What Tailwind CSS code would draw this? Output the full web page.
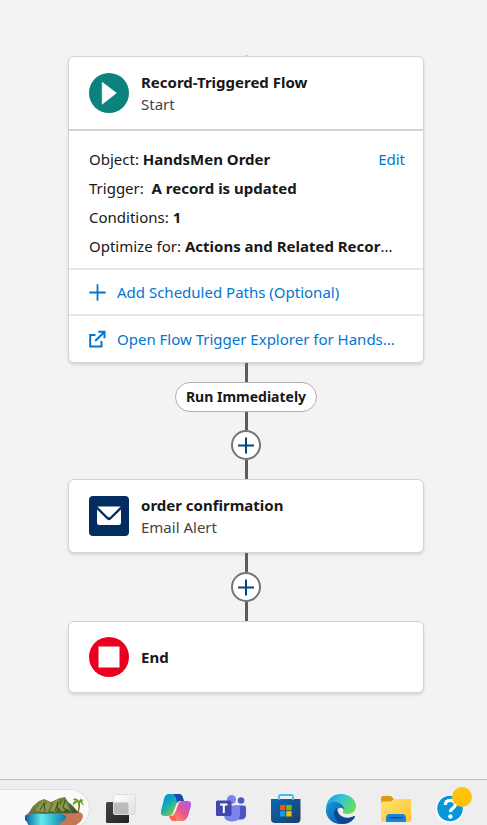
<!DOCTYPE html>
<html lang="en">
<head>
<meta charset="utf-8">
<meta name="viewport" content="width=device-width, initial-scale=1">
<title>Flow Builder</title>
<script src="https://cdn.jsdelivr.net/npm/@tailwindcss/browser@4"></script>
</head>
<body class="flex min-h-screen flex-col bg-[#f3f3f3] font-['Segoe_UI','Noto_Sans',sans-serif] text-[15px] leading-[22px] text-[#181818]">
<main class="flex grow flex-col items-center pt-[55px] pr-[63px] pl-[68px]">
  <div class="h-px w-[3px] bg-[#cfcfcf]"></div>

  <section class="w-full rounded-md border border-[#d4d4d4] bg-white shadow-[0_2px_3px_rgba(0,0,0,0.12)]">
    <header class="flex items-center gap-3 border-b-2 border-[#d4d4d4] px-5 py-3.5">
      <svg class="size-10 shrink-0" viewBox="0 0 40 40" aria-hidden="true"><circle cx="20" cy="20" r="20" fill="#0b827c"/><path d="M13.2 9.2 L27.4 20 L13.2 31.2 Z" fill="#fff" stroke="#fff" stroke-width=".6" stroke-linejoin="round"/></svg>
      <div>
        <h2 class="font-bold">Record-Triggered Flow</h2>
        <p class="text-[#444]">Start</p>
      </div>
    </header>
    <div class="border-b-2 border-[#e5e5e5] px-5 pt-3.5 pb-[7px] leading-[29px]">
      <div class="flex justify-between">
        <p>Object: <strong>HandsMen Order</strong></p>
        <a href="#" class="-mr-0.5 text-[#0176d3]">Edit</a>
      </div>
      <p>Trigger:&nbsp; <strong>A record is updated</strong></p>
      <p>Conditions: <strong>1</strong></p>
      <p class="whitespace-nowrap">Optimize for: <strong>Actions and Related Recor</strong>...</p>
    </div>
    <a href="#" class="flex items-center gap-2.5 border-b-2 border-[#e5e5e5] px-5 py-[11px] text-[#0176d3]">
      <svg class="size-[18px] shrink-0" viewBox="0 0 18 18" aria-hidden="true"><path d="M8.500 2v15M1 9.500h15" stroke="#0176d3" stroke-width="1.8" stroke-linecap="round"/></svg>
      <span class="whitespace-nowrap">Add Scheduled Paths (Optional)</span>
    </a>
    <a href="#" class="flex items-center gap-2.5 px-5 py-3 text-[#0176d3]">
      <svg class="size-[18px] shrink-0" viewBox="0 0 18 18" fill="none" stroke="#0176d3" stroke-width="2" aria-hidden="true"><path d="M6.500 5H1.200v11.400H12.500V11M9.300 1.800H15.500v6.400M15.100 2.200L6.200 11"/></svg>
      <span class="whitespace-nowrap">Open Flow Trigger Explorer for Hands...</span>
    </a>
  </section>

  <div class="h-[19px] w-[3px] bg-[#5c5c5c]"></div>
  <div class="flex h-[30px] items-center rounded-full border border-[#aeaeae] bg-white px-2.5 text-sm font-bold">Run Immediately</div>
  <div class="h-[18px] w-[3px] bg-[#5c5c5c]"></div>
  <button type="button" aria-label="Add element" class="flex size-[30px] items-center justify-center rounded-full border-2 border-[#747474] bg-white">
    <svg class="size-[18px]" viewBox="0 0 18 18" aria-hidden="true"><path d="M9 1.5v16M1 9.5h16" stroke="#014486" stroke-width="2"/></svg>
  </button>
  <div class="h-[19px] w-[3px] bg-[#5c5c5c]"></div>

  <section class="flex w-full items-center gap-3 rounded-md border border-[#d4d4d4] bg-white px-5 py-3.5 shadow-[0_2px_3px_rgba(0,0,0,0.12)]">
    <svg class="size-10 shrink-0" viewBox="0 0 40 40" aria-hidden="true"><rect width="40" height="40" rx="4" fill="#032d60"/><path d="M8.4 10.6h23.2L21.3 20.7q-1.3 1.2-2.6 0Z" fill="#fff"/><path d="M8 13.6l10 9.7q2 1.7 4 0l10-9.7v13.2q0 2.2-2.2 2.2H10.200q-2.200 0-2.200-2.200Z" fill="#fff"/></svg>
    <div>
      <h2 class="font-bold">order confirmation</h2>
      <p class="text-[#444]">Email Alert</p>
    </div>
  </section>

  <div class="h-[19px] w-[3px] bg-[#5c5c5c]"></div>
  <button type="button" aria-label="Add element" class="flex size-[30px] items-center justify-center rounded-full border-2 border-[#747474] bg-white">
    <svg class="size-[18px]" viewBox="0 0 18 18" aria-hidden="true"><path d="M9 1.5v16M1 9.5h16" stroke="#014486" stroke-width="2"/></svg>
  </button>
  <div class="h-[19px] w-[3px] bg-[#5c5c5c]"></div>

  <section class="flex w-full items-center gap-3 rounded-md border border-[#d4d4d4] bg-white px-5 py-[15px] shadow-[0_2px_3px_rgba(0,0,0,0.12)]">
    <svg class="size-10 shrink-0" viewBox="0 0 40 40" aria-hidden="true"><circle cx="20" cy="20" r="20" fill="#ea001e"/><path d="M9.500 9.500h21v21h-21Z" fill="#fff"/></svg>
    <h2 class="font-bold">End</h2>
  </section>
</main>

<footer class="flex h-[46px] items-start gap-4 overflow-hidden border-t border-[#bcbcbc] bg-[#eeeeee]">
  <div class="mt-[9px] flex h-10 w-[90px] shrink-0 justify-end rounded-r-full border border-l-0 border-[#e0e0e0] bg-[#fafafa] pr-1">
    <svg class="mt-1.5 h-[34px] w-[60px]" viewBox="0 0 60 34" aria-hidden="true">
      <defs>
        <linearGradient id="sea" x1="0" x2="1"><stop stop-color="#075f9c"/><stop offset=".4" stop-color="#60ebed"/><stop offset="1" stop-color="#087daf"/></linearGradient>
        <linearGradient id="hill" x2="1" y2="1"><stop stop-color="#8f9a48"/><stop offset=".5" stop-color="#64773a"/><stop offset="1" stop-color="#304a29"/></linearGradient>
      </defs>
      <path d="M0 20q2-4 12-5l38 0q8 1 8 5 0 5-7 9l-6 5H5Z" fill="#c87656"/>
      <path d="M3 18L8 10 14 5 19 3 26 6 35 2 40 1 43 6 47 9 54 17Z" fill="url(#hill)"/>
      <path d="M10 15l6-8 2-3 1 7 4-6 3 3-3 8M25 15l4-9 4-3 2 7 4-7 3 5 5 9-6-4-4 3-3-5-3 5Z" fill="#909847"/>
      <path d="M15 14l4-7 1 8M30 15l3-9-1 9M40 4l-2 8 7 3" fill="none" stroke="#34502a" stroke-width="1"/>
      <path d="M0 20q4-3 19-2 20-1 22 2 1 4-7 7l2 7H5q-1-7-5-10Z" fill="url(#sea)"/>
      <path d="M53 17q2-6 1-12" stroke="#91632e" stroke-width="1.500" fill="none"/>
      <path d="M54 5q-4-5-6-1l4 1q-5 0-4 4l5-3 0 6 2-6 4 4-2-5 2-1-4-1 2-3Z" fill="#6f9626"/>
    </svg>
  </div>
  <div class="mt-[14px] flex gap-[25px]">
    <svg class="size-[30px] shrink-0" viewBox="0 0 30 30" aria-hidden="true"><defs><linearGradient id="tv" y2="1"><stop stop-color="#454545"/><stop offset="1" stop-color="#222"/></linearGradient><linearGradient id="tg" x2="1" y2="1"><stop stop-color="#fff"/><stop offset="1" stop-color="#dedede"/></linearGradient></defs><rect y="8" width="23" height="21" rx="1.500" fill="url(#tv)"/><rect x="7.500" y=".5" width="22" height="20" rx="1.500" fill="url(#tg)" stroke="#ddd"/><path d="M8 8.500h13.500q1 0 1 1V20H8Z" fill="#bbb"/></svg>
    <svg class="size-[30px] shrink-0" viewBox="0 0 30 30" aria-hidden="true"><defs><linearGradient id="ca" y2="1"><stop stop-color="#078bd9"/><stop offset=".35" stop-color="#0ba7c6"/><stop offset=".65" stop-color="#67c45b"/><stop offset="1" stop-color="#f4cf28"/></linearGradient><linearGradient id="cb" x1="1" x2="0" y2="1"><stop stop-color="#a65be8"/><stop offset=".5" stop-color="#ed538d"/><stop offset="1" stop-color="#ffab4b"/></linearGradient></defs><path d="M8 0h10q3 0 4 4l1 3h-4q-3 0-4 4l-3 8q-1 3-4 3H4q-5 0-4-5L3 5q1-5 5-5Z" fill="url(#ca)"/><path d="M15 0h3q3 0 4 4l1 3h-4q-2 0-3 2-1-8-4-9Z" fill="#1848b6"/><path d="M22 7h4q5 0 4 5l-3 10q-2 5-6 5H13q-3 0-4-4h1q3 0 4-4l3-8q1-4 5-4Z" fill="url(#cb)"/><path d="M8 22h2q3 0 4-4l1 9h-2q-4 0-5-5Z" fill="#ff654f"/></svg>
    <svg class="size-[30px] shrink-0" viewBox="0 0 30 30" aria-hidden="true"><circle cx="25" cy="6.500" r="3.300" fill="#5059c9"/><path d="M19 11.500h9q2 0 2 2v7q0 5-5 5h-6Z" fill="#4c55c3"/><circle cx="15.500" cy="5.500" r="4.500" fill="#7b83eb"/><path d="M8 11.500h14q2 0 2 2v7q0 7-8 7t-8-7Z" fill="#7b83eb"/><rect y="6.500" width="15.500" height="15.500" rx="1.500" fill="#4147ad"/><path d="M4 10.500h7.500M7.800 10.500V19" stroke="#fff" stroke-width="2"/></svg>
    <svg class="size-[30px] shrink-0" viewBox="0 0 30 30" aria-hidden="true"><defs><linearGradient id="st" y2="1"><stop stop-color="#0669b5"/><stop offset="1" stop-color="#203c65"/></linearGradient></defs><path d="M0 5h29.500v20q0 4-4 4H4q-4 0-4-4Z" fill="url(#st)"/><path d="M8 6V2.500Q8 1 9.500 1h11Q22 1 22 2.500V6" fill="none" stroke="#36bff0" stroke-width="1.800"/><path d="M9 11h5.300v5.300H9Z" fill="#f25022"/><path d="M15.300 11h5.300v5.300h-5.300Z" fill="#7fba00"/><path d="M9 17.200h5.300v5.300H9Z" fill="#00a4ef"/><path d="M15.300 17.200h5.300v5.300h-5.300Z" fill="#ffb900"/></svg>
    <svg class="size-[30px] shrink-0" viewBox="0 0 30 30" aria-hidden="true"><defs><linearGradient id="ea" x2="1" y2=".5"><stop stop-color="#168edb"/><stop offset=".5" stop-color="#32c5d6"/><stop offset="1" stop-color="#65df5c"/></linearGradient><linearGradient id="eb" y2="1"><stop stop-color="#1798df"/><stop offset="1" stop-color="#0756a9"/></linearGradient></defs><path d="M0 14C1 5 7 0 15 0c9 0 15 6 15 12 0 5-4 8-8 8-4 0-6-1-5-3 2-2 1-6-3-8C9 7 3 9 0 14Z" fill="url(#ea)"/><path d="M0 15C1 9 6 7 11 8c5 1 8 5 7 8-2-3-5-3-7 0-3 5 2 13 8 14-11 2-20-6-19-15Z" fill="url(#eb)"/><path d="M11 14c-6 5-2 15 7 16 4 0 9-3 11-7 0-1 0-1-1-1-8 4-16 1-17-8Z" fill="#0d4891"/></svg>
    <svg class="size-[30px] shrink-0" viewBox="0 0 30 30" aria-hidden="true"><defs><linearGradient id="fo" x2="1" y2="1"><stop stop-color="#ffe177"/><stop offset="1" stop-color="#ffc52d"/></linearGradient></defs><path d="M0 4q0-2 2-2h8l3 3h15q2 0 2 2v5H0Z" fill="#dc9c12"/><path d="M0 9q0-1.500 1.500-1.500H10L13 5h15q2 0 2 2v19q0 2-2 2H2q-2 0-2-2Z" fill="url(#fo)"/><path d="M5 28v-4q0-4 4-4h12q4 0 4 4v4Z" fill="#1683d6"/><path d="M8.500 23.700h13" stroke="#0753a0" stroke-width="1.400" stroke-linecap="round"/></svg>
    <div class="relative size-[30px] shrink-0">
      <svg class="size-[30px]" viewBox="0 0 30 30" aria-hidden="true"><circle cx="13.500" cy="15" r="14" fill="#fff"/><circle cx="14" cy="14.500" r="12.800" fill="#0796d8"/><path d="M9.300 11q0-4.700 5-4.700t5 4.200q0 2.200-2.600 3.800-2.200 1.300-2.200 3.700" fill="none" stroke="#fff" stroke-width="3.200"/><circle cx="14.400" cy="22.500" r="2.200" fill="#fff"/></svg>
      <span class="absolute -top-[7px] left-4 size-5 rounded-full bg-[#ffc10a]"></span>
    </div>
  </div>
</footer>
</body>
</html>
